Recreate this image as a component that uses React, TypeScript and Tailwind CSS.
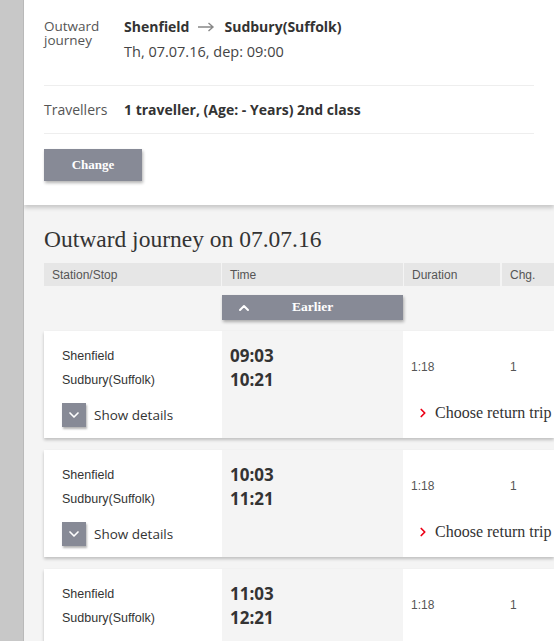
import { ChevronDown, ChevronRight, ChevronUp } from "lucide-react";

interface Connection {
  dep: string;
  arr: string;
  duration: string;
  changes: string;
}

const connections: Connection[] = [
  { dep: "09:03", arr: "10:21", duration: "1:18", changes: "1" },
  { dep: "10:03", arr: "11:21", duration: "1:18", changes: "1" },
  { dep: "11:03", arr: "12:21", duration: "1:18", changes: "1" },
];

const sans = "font-['Open_Sans',sans-serif]";
const arial = "font-['Liberation_Sans',Arial,sans-serif]";
const serif = "font-['Liberation_Serif',Georgia,serif]";

function ConnectionCard({ c }: { c: Connection }) {
  return (
    <div className="flex h-[107px] shrink-0 bg-white shadow-[0_2px_3px_rgba(0,0,0,0.22)]">
      {/* stations */}
      <div className="w-[178px] pl-[18px] pt-[13px] flex flex-col">
        <div className={`${arial} text-[12.5px] text-[#333] leading-[24px]`}>Shenfield</div>
        <div className={`${arial} text-[12.5px] text-[#333] leading-[24px]`}>Sudbury(Suffolk)</div>
        <div className="flex items-center gap-2 mt-[11px]">
          <span className="w-6 h-6 bg-[#878a96] flex items-center justify-center shadow-[1px_2px_2px_rgba(0,0,0,0.3)]">
            <ChevronDown className="w-4 h-4 text-white" strokeWidth={2.5} />
          </span>
          <span className={`${sans} text-[13.5px] text-[#333]`}>Show details</span>
        </div>
      </div>
      {/* time */}
      <div className="w-[181px] bg-[#f4f4f4] pl-2 pt-[13px]">
        <div className={`${sans} font-bold text-[17px] text-[#333] leading-[24px]`}>{c.dep}</div>
        <div className={`${sans} font-bold text-[17px] text-[#333] leading-[24px]`}>{c.arr}</div>
      </div>
      {/* duration / changes / action */}
      <div className="flex-1 flex flex-col pl-[8px] pt-[28px]">
        <div className={`flex ${arial} text-[12px] text-[#555] leading-[16px]`}>
          <span className="w-[99px]">{c.duration}</span>
          <span>{c.changes}</span>
        </div>
        <div className="flex items-center mt-[26px] ml-[5px] whitespace-nowrap">
          <ChevronRight className="w-[14px] h-[14px] text-[#ec0016]" strokeWidth={3} />
          <span className={`${serif} text-[16px] text-[#333] ml-[5px]`}>Choose return trip</span>
        </div>
      </div>
    </div>
  );
}

export default function App() {
  return (
    <div className="flex w-[554px] h-[641px] overflow-hidden bg-[#c8c8c8]">
      <div className="w-[24px] shrink-0 bg-[#c8c8c8] border-r border-[#b9b9b9]" />

      <div className="flex-1 min-w-0 bg-[#f4f4f4] flex flex-col overflow-hidden">
        {/* Search summary */}
        <div className="bg-white px-5 pt-[17px] pb-[24px] shadow-[0_3px_4px_rgba(0,0,0,0.18)] relative z-10">
          <div className="flex pb-[23px] border-b border-[#eeeeee]">
            <div className={`${sans} w-20 text-[13.5px] leading-[14px] text-[#555] pt-[2px]`}>
              Outward
              <br />
              journey
            </div>
            <div>
              <div className={`${sans} flex items-center text-[14px] font-bold text-[#333] leading-[20px]`}>
                <span>Shenfield</span>
                <svg width="18" height="10" viewBox="0 0 18 10" className="ml-[8px] mr-[9px]">
                  <path d="M1 5h15M11.5 1l4.5 4-4.5 4" fill="none" stroke="#888" strokeWidth="1.4" />
                </svg>
                <span>Sudbury(Suffolk)</span>
              </div>
              <div className={`${sans} text-[14.5px] text-[#444] leading-[20px] mt-[5px]`}>
                Th, 07.07.16, dep: 09:00
              </div>
            </div>
          </div>

          <div className="flex items-center h-[48px] border-b border-[#eeeeee]">
            <div className={`${sans} w-20 text-[14px] text-[#555]`}>Travellers</div>
            <div className={`${sans} text-[14px] font-bold text-[#333]`}>
              1 traveller, (Age: - Years) 2nd class
            </div>
          </div>

          <button
            className={`${serif} mt-[15px] w-[98px] h-[32px] bg-[#878a96] text-white font-bold text-[13px] shadow-[1px_2px_3px_rgba(0,0,0,0.3)]`}
          >
            Change
          </button>
        </div>

        {/* Results */}
        <div className="pl-5 pt-[21px] flex flex-col">
          <h2 className={`${serif} text-[23.5px] text-[#333] leading-[26px]`}>Outward journey on 07.07.16</h2>

          <div className={`flex mt-[11px] h-[23px] ${arial} text-[12px] text-[#555]`}>
            <div className="w-[177px] bg-[#e6e6e6] pl-[8px] flex items-center">Station/Stop</div>
            <div className="w-[181px] ml-px bg-[#e6e6e6] pl-[8px] flex items-center">Time</div>
            <div className="w-[96px] ml-px bg-[#e6e6e6] pl-[8px] flex items-center">Duration</div>
            <div className="flex-1 ml-[2px] bg-[#e6e6e6] pl-[8px] flex items-center">Chg.</div>
          </div>

          <div className="flex mt-[9px] ml-[178px]">
            <button className="w-[181px] h-[25px] bg-[#878a96] flex items-center shadow-[1px_2px_3px_rgba(0,0,0,0.3)]">
              <ChevronUp className="w-4 h-4 text-white ml-[14px]" strokeWidth={3} />
              <span className={`${serif} font-bold text-[13.5px] text-white ml-[40px]`}>Earlier</span>
            </button>
          </div>

          <div className="flex flex-col gap-[12px] mt-[11px]">
            {connections.map((c) => (
              <ConnectionCard key={c.dep} c={c} />
            ))}
          </div>
        </div>
      </div>
    </div>
  );
}
